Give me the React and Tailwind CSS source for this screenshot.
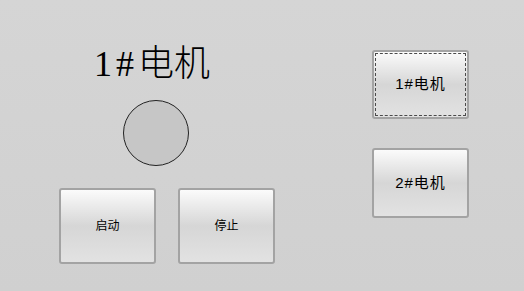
const cjk = { fontFamily: '"Liberation Sans", "Noto Sans CJK SC", sans-serif' };
const serif = { fontFamily: '"Liberation Serif", "Noto Sans CJK SC", serif' };

function PanelButton({ label, className = "", focused = false, textClass = "text-[12px]" }) {
  return (
    <button
      className={`relative flex items-center justify-center rounded-[3px] border-2 border-[#a3a3a3] bg-gradient-to-b from-[#fbfbfb] via-[#d6d6d6] to-[#e2e2e2] text-black ${className}`}
      style={cjk}
    >
      {focused && (
        <span className="pointer-events-none absolute inset-[1px] border border-dashed border-[#4a4a4a]" />
      )}
      <span className={textClass}>{label}</span>
    </button>
  );
}

export default function App() {
  return (
    <div className="flex h-[291px] w-[524px] overflow-hidden bg-gradient-to-b from-[#d5d5d5] to-[#d0d0d0]">
      {/* Left: motor status + controls */}
      <div className="flex w-[216px] flex-col pl-[59px] box-content">
        <div
          className="ml-[35px] mt-[46px] h-[36px] text-[36px] font-light leading-[36px] text-black whitespace-nowrap"
          style={serif}
        >
          <span className="tracking-[4px] font-normal">1#</span>电机
        </div>
        <div className="ml-[64px] mt-[18px] h-[66px] w-[66px] rounded-full border border-[#222] bg-[#c6c6c6]" />
        <div className="mt-[22px] flex gap-[22px]">
          <PanelButton label="启动" className="h-[76px] w-[97px]" />
          <PanelButton label="停止" className="h-[76px] w-[97px]" />
        </div>
      </div>

      {/* Right: motor selection */}
      <div className="ml-[97px] flex flex-col gap-[29px] pt-[50px]">
        <PanelButton label="1#电机" focused className="h-[69px] w-[97px]" textClass="text-[15px] tracking-[1px]" />
        <PanelButton label="2#电机" className="h-[70px] w-[97px]" textClass="text-[15px] tracking-[1px]" />
      </div>
    </div>
  );
}
